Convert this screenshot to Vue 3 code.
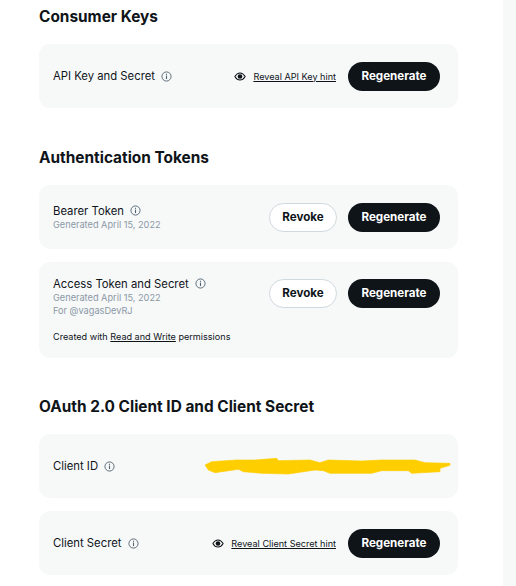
<script setup>
const sections = [
  {
    title: "Consumer Keys",
    cards: [{ label: "API Key and Secret", hint: "Reveal API Key hint", regenerate: true }]
  },
  {
    title: "Authentication Tokens",
    cards: [
      { label: "Bearer Token", sub: ["Generated April 15, 2022"], revoke: true, regenerate: true },
      {
        label: "Access Token and Secret",
        sub: ["Generated April 15, 2022", "For @vagasDevRJ"],
        revoke: true,
        regenerate: true,
        permissions: true
      }
    ]
  },
  {
    title: "OAuth 2.0 Client ID and Client Secret",
    cards: [
      { label: "Client ID", scribble: true },
      { label: "Client Secret", hint: "Reveal Client Secret hint", regenerate: true }
    ]
  }
]
</script>

<template>
  <div class="page">
    <main class="content">
      <section v-for="section in sections" :key="section.title" class="section">
        <h2>{{ section.title }}</h2>

        <div class="cards">
          <div
            v-for="card in section.cards"
            :key="card.label"
            class="card"
            :class="{ 'card-sub': card.sub, 'card-tall': card.permissions }"
          >
            <div class="row">
              <div class="info">
                <div class="label">
                  {{ card.label }}
                  <svg class="info-icon" viewBox="0 0 12 12" width="11" height="11">
                    <circle cx="6" cy="6" r="5" fill="none" stroke="#536471" stroke-width="1" />
                    <rect x="5.4" y="5" width="1.2" height="3.8" fill="#536471" />
                    <rect x="5.4" y="3" width="1.2" height="1.2" fill="#536471" />
                  </svg>
                </div>
                <div v-for="line in card.sub" :key="line" class="sub">{{ line }}</div>
              </div>

              <div class="actions">
                <template v-if="card.hint">
                  <svg class="eye" viewBox="0 0 14 10" width="12" height="9">
                    <path d="M1 5 C3 1.6 5 .8 7 .8 S11 1.6 13 5 C11 8.4 9 9.2 7 9.2 S3 8.4 1 5 Z" fill="none" stroke="#0f1419" stroke-width="1.2" />
                    <circle cx="7" cy="5" r="2.7" fill="#0f1419" />
                  </svg>
                  <a class="hint" href="#">{{ card.hint }}</a>
                </template>
                <button v-if="card.revoke" class="btn btn-light">Revoke</button>
                <button v-if="card.regenerate" class="btn btn-dark">Regenerate</button>
              </div>
            </div>

            <p v-if="card.permissions" class="permissions">
              Created with <a href="#">Read and Write</a> permissions
            </p>

            <svg v-if="card.scribble" class="scribble" viewBox="0 0 786 90" width="262" height="30">
              <path
                d="M30 45 L50 35 L125 30 L180 30 L245 25 L250 32 L345 30 L375 38 L400 30 L500 33 L560 30 L660 30 L690 38 L765 40 L765 46 L735 55 L735 65 L650 70 L640 62 L560 62 L530 70 L405 70 L385 62 L360 60 L280 72 L200 70 L145 65 L130 58 L60 68 L40 60 Z"
                fill="#ffce00"
                stroke="#ffce00"
                stroke-width="2"
                stroke-linejoin="round"
              />
            </svg>
          </div>
        </div>
      </section>
    </main>
    <aside class="side"></aside>
  </div>
</template>

<style>
html,
body {
  margin: 0;
  background: #fff;
}
</style>

<style scoped>
.page {
  display: flex;
  width: 516px;
  height: 586px;
  overflow: hidden;
  font-family: "Inter", "Liberation Sans", sans-serif;
  color: #0f1419;
}

.content {
  width: 419px;
  padding: 5px 45px 0 39px;
}

.side {
  width: 13px;
  background: #f7f9f9;
}

.section {
  margin-bottom: 37.5px;
}

h2 {
  margin: 0 0 15px;
  font-size: 15.4px;
  line-height: 24px;
  font-weight: 700;
}

.cards {
  display: flex;
  flex-direction: column;
  gap: 13px;
}

.card {
  position: relative;
  min-height: 64px;
  box-sizing: border-box;
  padding: 0 18px 0 14px;
  background: #f7f9f9;
  border-radius: 11px;
  display: flex;
  flex-direction: column;
  justify-content: center;
}

.card-sub {
  padding-top: 1px;
}

.card-tall {
  padding-top: 15px;
  padding-bottom: 15px;
}

.card-tall .row {
  align-items: flex-start;
}

.card-tall .actions {
  margin-top: 2px;
}

.row {
  display: flex;
  align-items: center;
  justify-content: space-between;
}

.label {
  display: flex;
  align-items: center;
  gap: 6px;
  font-size: 11.3px;
  line-height: 14px;
}

.sub {
  font-size: 9.2px;
  line-height: 13px;
  color: #8b98a5;
}

.actions {
  display: flex;
  align-items: center;
  margin-left: auto;
}

.info-icon {
  flex: none;
}

.eye {
  margin-right: 7px;
}

.hint {
  margin-right: 12px;
  font-size: 9.1px;
  color: #0f1419;
}

.btn {
  height: 29px;
  border-radius: 15px;
  font-family: inherit;
  font-size: 11.6px;
  font-weight: 700;
  padding: 0;
  box-sizing: border-box;
}

.btn-light {
  width: 68px;
  margin-right: 11px;
  background: #fff;
  border: 1px solid #cfd9de;
  color: #0f1419;
}

.btn-dark {
  width: 92px;
  background: #0f1419;
  border: none;
  color: #fff;
}

.permissions {
  margin: 13px 0 0;
  font-size: 9.1px;
  line-height: 13px;
}

.permissions a {
  color: inherit;
}

.scribble {
  position: absolute;
  left: 156px;
  top: 16px;
}
</style>
